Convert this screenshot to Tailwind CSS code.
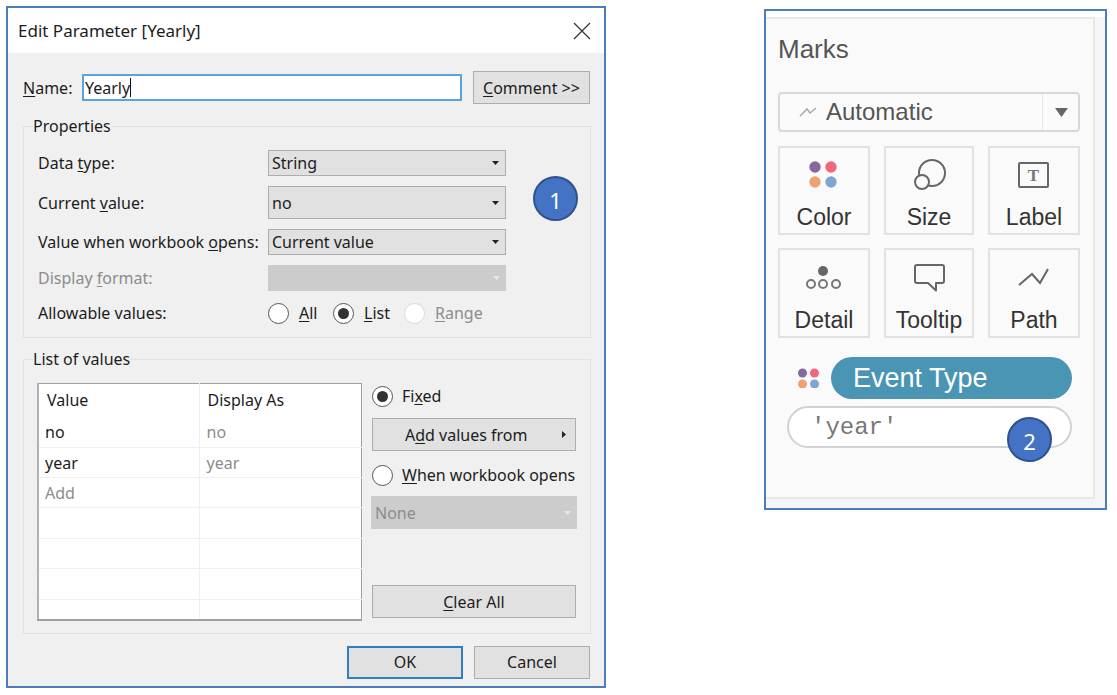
<!DOCTYPE html>
<html lang="en">
<head>
  <meta charset="UTF-8" />
  <title>Edit Parameter and Marks</title>
  <script src="https://cdn.jsdelivr.net/npm/@tailwindcss/browser@4"></script>
</head>
<body class="bg-white">
  <div class="w-[1117px] h-[695px] overflow-hidden flex items-start pt-[6px] pl-[6px] font-['Noto_Sans',sans-serif] text-[16px] text-[#1c1c1c]">

    <!-- Edit Parameter dialog -->
    <div class="relative w-[600px] h-[682px] shrink-0 border-2 border-[#4f7cbc] flex flex-col bg-[#f0f0f0]">
      <div class="h-[45px] shrink-0 bg-white flex items-center justify-between pl-[10px] pr-[13px] text-[17px]">
        <span>Edit Parameter [Yearly]</span>
        <svg class="w-[18px] h-[18px]" viewBox="0 0 18 18"><path d="M1 1L17 17M17 1L1 17" stroke="#333" stroke-width="1.2" fill="none"/></svg>
      </div>

      <div class="flex-1 flex flex-col pl-[15px] pr-[13px]">
        <!-- name row -->
        <div class="mt-[18px] h-[33px] flex items-center">
          <label class="w-[59px]"><u class="underline-offset-2">N</u>ame:</label>
          <div class="w-[380px] h-[27px] bg-white border-2 border-[#5aa5dc] flex items-center pl-px">
            <span>Yearly</span><span class="w-px h-[19px] bg-[#111]"></span>
          </div>
          <button class="ml-[11px] w-[117px] h-[33px] bg-[#e1e1e1] border border-[#adadad]"><u class="underline-offset-2">C</u>omment &gt;&gt;</button>
        </div>

        <!-- properties -->
        <fieldset class="mt-[13px] border border-[#e2e2e2] pl-[14px] pt-[15px] pb-[13px]">
          <legend class="-ml-[5px] leading-[18px]">Properties</legend>
          <div class="flex flex-col gap-[10px]">
            <div class="flex items-center">
              <span class="w-[230px]">Data <u class="underline-offset-2">t</u>ype:</span>
              <div class="w-[238px] h-[26px] bg-[#e1e1e1] border border-[#adadad] flex items-center justify-between pl-[3px] pr-[6px]">
                <span>String</span>
                <svg class="w-[7px] h-[4px]" viewBox="0 0 7 4"><path d="M0 0H7L3.5 4Z" fill="#222"/></svg>
              </div>
            </div>
            <div class="flex items-center">
              <span class="w-[230px]">Current <u class="underline-offset-2">v</u>alue:</span>
              <div class="w-[238px] h-[33px] bg-[#e1e1e1] border border-[#adadad] flex items-center justify-between pl-[3px] pr-[6px]">
                <span>no</span>
                <svg class="w-[7px] h-[4px]" viewBox="0 0 7 4"><path d="M0 0H7L3.5 4Z" fill="#222"/></svg>
              </div>
            </div>
            <div class="flex items-center">
              <span class="w-[230px]">Value when workbook <u class="underline-offset-2">o</u>pens:</span>
              <div class="w-[238px] h-[26px] bg-[#e1e1e1] border border-[#adadad] flex items-center justify-between pl-[3px] pr-[6px]">
                <span>Current value</span>
                <svg class="w-[7px] h-[4px]" viewBox="0 0 7 4"><path d="M0 0H7L3.5 4Z" fill="#222"/></svg>
              </div>
            </div>
            <div class="flex items-center">
              <span class="w-[230px] text-[#8c8c8c]">Display <u class="underline-offset-2">f</u>ormat:</span>
              <div class="w-[238px] h-[26px] bg-[#cccccc] flex items-center justify-end pr-[6px]">
                <svg class="w-[7px] h-[4px]" viewBox="0 0 7 4"><path d="M0 0H7L3.5 4Z" fill="#e6e6e6"/></svg>
              </div>
            </div>
            <div class="flex items-center h-[22px] mt-px">
              <span class="w-[230px]">Allowable values:</span>
              <div class="w-[65px] flex items-center gap-[10px]">
                <span class="w-[21px] h-[21px] rounded-full bg-white border border-[#555]"></span>
                <span><u class="underline-offset-2">A</u>ll</span>
              </div>
              <div class="w-[71px] flex items-center gap-[10px]">
                <span class="w-[21px] h-[21px] rounded-full bg-white border border-[#555] flex items-center justify-center"><span class="w-[11px] h-[11px] rounded-full bg-[#333]"></span></span>
                <span><u class="underline-offset-2">L</u>ist</span>
              </div>
              <div class="flex items-center gap-[10px]">
                <span class="w-[21px] h-[21px] rounded-full bg-white border border-[#d8d8d8]"></span>
                <span class="text-[#8c8c8c]"><u class="underline-offset-2">R</u>ange</span>
              </div>
            </div>
          </div>
        </fieldset>

        <!-- list of values -->
        <fieldset class="mt-[12px] border border-[#e2e2e2] pl-[14px] pt-[15px] pb-[12px]">
          <legend class="-ml-[5px] leading-[18px]">List of values</legend>
          <div class="flex">
            <table class="-ml-px w-[325px] h-[237px] table-fixed border-collapse bg-white border-t border-r border-b-2 border-l-2 border-t-[#a0a0a0] border-r-[#a0a0a0] border-b-[#a0a0a0] border-l-[#b0b0b0]">
              <tbody>
                <tr class="h-[33px]"><td class="w-[161px] pl-[8px] border-r border-[#efefef]">Value</td><td class="pl-[8px]">Display As</td></tr>
                <tr class="h-[31px] border-b border-[#efefef]"><td class="pl-[6px] border-r border-[#efefef]">no</td><td class="pl-[7px] text-[#8c8c8c]">no</td></tr>
                <tr class="h-[30px] border-b border-[#efefef]"><td class="pl-[6px] border-r border-[#efefef]">year</td><td class="pl-[7px] text-[#8c8c8c]">year</td></tr>
                <tr class="h-[30px] border-b border-[#efefef]"><td class="pl-[6px] border-r border-[#efefef] text-[#8c8c8c]">Add</td><td></td></tr>
                <tr class="h-[31px] border-b border-[#efefef]"><td class="border-r border-[#efefef]"></td><td></td></tr>
                <tr class="h-[30px] border-b border-[#efefef]"><td class="border-r border-[#efefef]"></td><td></td></tr>
                <tr class="h-[31px] border-b border-[#efefef]"><td class="border-r border-[#efefef]"></td><td></td></tr>
                <tr class="h-[20px]"><td class="border-r border-[#efefef]"></td><td></td></tr>
              </tbody>
            </table>
            <div class="ml-[9px] w-[206px] flex flex-col items-center">
              <div class="w-full h-[26px] flex items-center gap-[9px] pl-px">
                <span class="w-[21px] h-[21px] rounded-full bg-white border border-[#555] flex items-center justify-center"><span class="w-[11px] h-[11px] rounded-full bg-[#333]"></span></span>
                <span>Fi<u class="underline-offset-2">x</u>ed</span>
              </div>
              <button class="mt-[9px] w-[204px] h-[33px] bg-[#e1e1e1] border border-[#adadad] flex items-center pl-[32px] pr-[9px] justify-between">
                <span>A<u class="underline-offset-2">d</u>d values from</span>
                <svg class="w-[4px] h-[7px]" viewBox="0 0 4 7"><path d="M0 0V7L4 3.5Z" fill="#222"/></svg>
              </button>
              <div class="mt-[12px] w-full h-[24px] flex items-center gap-[9px] pl-px">
                <span class="w-[21px] h-[21px] rounded-full bg-white border border-[#555]"></span>
                <span><u class="underline-offset-2">W</u>hen workbook opens</span>
              </div>
              <div class="mt-[9px] w-full h-[33px] bg-[#cccccc] flex items-center justify-between pl-[4px] pr-[6px] text-[#8c8c8c]">
                <span>None</span>
                <svg class="w-[7px] h-[4px]" viewBox="0 0 7 4"><path d="M0 0H7L3.5 4Z" fill="#e6e6e6"/></svg>
              </div>
              <button class="mt-[56px] w-[204px] h-[33px] bg-[#e1e1e1] border border-[#adadad]"><u class="underline-offset-2">C</u>lear All</button>
            </div>
          </div>
        </fieldset>

        <!-- footer -->
        <div class="mt-[12px] flex justify-end gap-[11px] pr-px">
          <button class="w-[116px] h-[33px] bg-[#e1e1e1] border-2 border-[#2d7fc1]">OK</button>
          <button class="w-[116px] h-[33px] bg-[#e1e1e1] border border-[#adadad]">Cancel</button>
        </div>
      </div>

      <div class="absolute left-[525px] top-[168px] w-[45px] h-[45px] pt-[3px] rounded-full bg-[#4472c4] border-2 border-[#2f528f] flex items-center justify-center text-white text-[22px]">1</div>
    </div>

    <!-- Marks card -->
    <div class="relative ml-[158px] mt-[3px] w-[343px] h-[501px] shrink-0 border-2 border-[#4f7cbc] bg-[#f5f5f5] font-['Liberation_Sans',sans-serif] text-[23px] text-[#333]">
      <div class="h-[6px] bg-white"></div>
      <div class="w-[329px] h-[482px] bg-[#fafafa] border-t-2 border-r-2 border-b-2 border-[#e8e8e8] pl-[12px] pt-[15px]">
        <div class="h-[30px] leading-[30px] text-[26px] text-[#555]">Marks</div>

        <div class="mt-[28px] w-[302px] h-[40px] flex border-2 border-[#d8d8d8] rounded-[4px] bg-[#fbfbfb]">
          <div class="flex-1 flex items-center pl-[19px] text-[24px] text-[#555]">
            <svg class="w-[18px] h-[10px]" viewBox="0 0 18 10"><path d="M1 9L8 2L11 6L17 1" stroke="#aaa" stroke-width="1.5" fill="none"/></svg>
            <span class="ml-[9px]">Automatic</span>
          </div>
          <div class="w-[36px] pl-[2px] border-l border-[#e8e8e8] flex items-center justify-center">
            <svg class="w-[13px] h-[9px]" viewBox="0 0 13 9"><path d="M0 0H13L6.5 9Z" fill="#666"/></svg>
          </div>
        </div>

        <div class="mt-[14px] grid grid-cols-[92px_90px_92px] gap-x-[14px] gap-y-[13px] w-[302px]">
          <div class="h-[89px] border-2 border-[#e2e2e2] flex flex-col items-center">
            <svg class="mt-[7px] w-[40px] h-[36px]" viewBox="0 0 40 36">
              <circle cx="11" cy="12" r="5.7" fill="#84689e"/><circle cx="27" cy="12" r="5.7" fill="#f0667b"/>
              <circle cx="11" cy="27" r="5.7" fill="#f0a174"/><circle cx="27" cy="27" r="5.7" fill="#7fa6d3"/>
            </svg>
            <span class="mt-[13px] leading-[26px]">Color</span>
          </div>
          <div class="h-[89px] border-2 border-[#e2e2e2] flex flex-col items-center">
            <svg class="mt-[7px] w-[40px] h-[36px]" viewBox="0 0 40 36">
              <circle cx="23" cy="18" r="13" fill="none" stroke="#666" stroke-width="2"/>
              <circle cx="13" cy="27" r="7" fill="#fafafa" stroke="#666" stroke-width="2"/>
            </svg>
            <span class="mt-[13px] leading-[26px]">Size</span>
          </div>
          <div class="h-[89px] border-2 border-[#e2e2e2] flex flex-col items-center">
            <svg class="mt-[7px] w-[40px] h-[36px]" viewBox="0 0 40 36">
              <rect x="5" y="8" width="29" height="24" rx="1" fill="none" stroke="#666" stroke-width="2"/>
              <text x="19.5" y="26" text-anchor="middle" font-family="Liberation Serif" font-weight="700" font-size="17" fill="#777">T</text>
            </svg>
            <span class="mt-[13px] leading-[26px]">Label</span>
          </div>
          <div class="h-[90px] border-2 border-[#e2e2e2] flex flex-col items-center">
            <svg class="mt-[7px] w-[40px] h-[36px]" viewBox="0 0 40 36">
              <circle cx="19" cy="14" r="5" fill="#666"/>
              <circle cx="7" cy="27" r="4" fill="none" stroke="#777" stroke-width="2"/>
              <circle cx="19" cy="27" r="4" fill="none" stroke="#777" stroke-width="2"/>
              <circle cx="32" cy="27" r="4" fill="none" stroke="#777" stroke-width="2"/>
            </svg>
            <span class="mt-[14px] leading-[26px]">Detail</span>
          </div>
          <div class="h-[90px] border-2 border-[#e2e2e2] flex flex-col items-center">
            <svg class="mt-[7px] w-[40px] h-[36px]" viewBox="0 0 40 36">
              <path d="M8 8H33Q35 8 35 10V24Q35 26 33 26H27V33.5L19 26H8Q6 26 6 24V10Q6 8 8 8Z" fill="none" stroke="#666" stroke-width="2" stroke-linejoin="round"/>
            </svg>
            <span class="mt-[14px] leading-[26px]">Tooltip</span>
          </div>
          <div class="h-[90px] border-2 border-[#e2e2e2] flex flex-col items-center">
            <svg class="mt-[7px] w-[40px] h-[36px]" viewBox="0 0 40 36">
              <path d="M5 28L18 17L26 26L34 12" fill="none" stroke="#666" stroke-width="2"/>
            </svg>
            <span class="mt-[14px] leading-[26px]">Path</span>
          </div>
        </div>

        <div class="mt-[19px] flex items-center pl-[20px]">
          <svg class="w-[21px] h-[20px]" viewBox="0 0 21 20">
            <circle cx="4.5" cy="5" r="4.5" fill="#84689e"/><circle cx="16.5" cy="5" r="4.5" fill="#f0667b"/>
            <circle cx="4.5" cy="16" r="4.5" fill="#f0a174"/><circle cx="16.5" cy="16" r="4.5" fill="#7fa6d3"/>
          </svg>
          <div class="ml-[12px] w-[241px] h-[42px] rounded-full bg-[#4a95b3] text-white text-[27px] flex items-center pl-[22px]">Event Type</div>
        </div>
        <div class="mt-[7px] ml-[9px] w-[285px] h-[42px] rounded-full bg-white border-2 border-[#d2d2d2] flex items-center pl-[22px] pt-px font-['Liberation_Mono',monospace] text-[24px] text-[#777]">'year'</div>
      </div>

      <div class="absolute left-[241px] top-[406px] w-[45px] h-[45px] pt-[3px] rounded-full bg-[#4472c4] border-2 border-[#2f528f] flex items-center justify-center text-white text-[22px] font-['Noto_Sans',sans-serif]">2</div>
    </div>
  </div>
</body>
</html>
